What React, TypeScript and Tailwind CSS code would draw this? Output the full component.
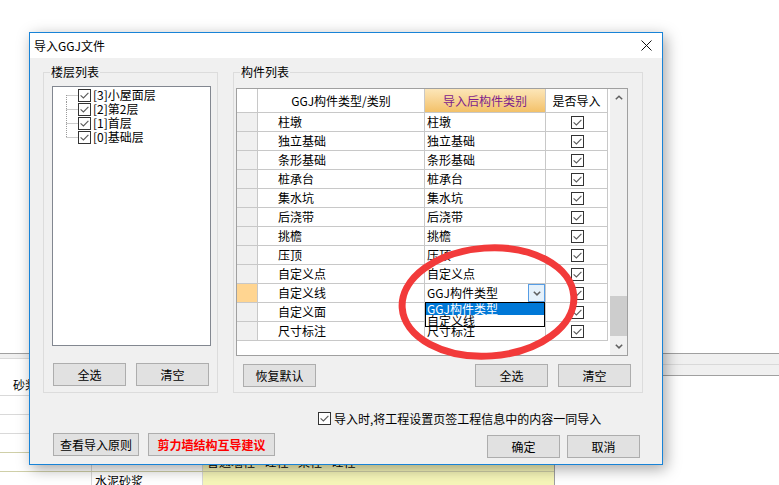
import React from "react";

const rows = [
  "柱墩",
  "独立基础",
  "条形基础",
  "桩承台",
  "集水坑",
  "后浇带",
  "挑檐",
  "压顶",
  "自定义点",
  "自定义线",
  "自定义面",
  "尺寸标注",
];

const floors = ["[3]小屋面层", "[2]第2层", "[1]首层", "[0]基础层"];

const CheckBox = () => (
  <span className="flex h-[13px] w-[13px] shrink-0 items-center justify-center border border-[#333333] bg-white">
    <svg width="9" height="7" viewBox="0 0 9 7" fill="none">
      <path d="M0.6 3.4L3.4 6L8.4 0.8" stroke="#5a5a5a" strokeWidth="1.1" />
    </svg>
  </span>
);

const Btn = ({ children, className = "" }: { children: React.ReactNode; className?: string }) => (
  <button
    type="button"
    className={`flex h-[23px] items-center justify-center border border-[#adadad] bg-[#e1e1e1] text-[12px] leading-none ${className}`}
  >
    {children}
  </button>
);

// tree connector drawn as dotted lines
const Connector = ({ idx, last }: { idx: number; last: boolean }) => (
  <svg width="12" height="14" viewBox="0 0 12 14" className="shrink-0">
    <line
      x1="0.5"
      y1={idx === 0 ? 7 : 0}
      x2="0.5"
      y2={last ? 7.5 : 14}
      stroke="#9a9a9a"
      strokeDasharray="1 1"
    />
    <line x1="0.5" y1="7.5" x2="12" y2="7.5" stroke="#9a9a9a" strokeDasharray="1 1" />
  </svg>
);

const Chevron = ({ up }: { up?: boolean }) => (
  <svg width="8" height="5" viewBox="0 0 8 5" fill="none">
    <path d={up ? "M0.8 4.3L4 1.2L7.2 4.3" : "M0.8 0.8L4 3.9L7.2 0.8"} stroke="#606060" strokeWidth="1.5" />
  </svg>
);

const App = () => {
  return (
    <div className="relative h-[485px] w-[779px] overflow-hidden bg-white font-['Noto_Sans_CJK_SC','Noto_Sans',sans-serif] text-[12px] text-black">
      {/* application behind the dialog */}
      <div className="flex pt-[353px]">
        <div className="w-[555px] border-r border-[#a0a0a0]">
          <div className="h-[5px] border-t border-[#a0a0a0] bg-[#f0f0f0]" />
          <div className="flex h-[37px] items-end border-t border-[#d9d9d9] pb-[3px] pl-[13px] leading-[14px]">
            砂浆类型
          </div>
          {[0, 1, 2, 3, 4].map((i) => (
            <div key={i} className={`flex h-[19px] border-t ${i >= 3 ? "border-[#cfcfa8]" : "border-[#d9d9d9]"}`}>
              <div className="w-[92px] border-r border-[#d9d9d9]" />
              <div className="w-[111px] border-r border-[#d9d9d9] pl-[3px] leading-[18px]">
                {i === 4 ? "水泥砂浆" : ""}
              </div>
              <div className={`flex-1 pl-[4px] leading-[18px] ${i >= 3 ? "bg-[#f6f6b9]" : ""}`}>
                {i === 3 ? "普通墙柱 - 砼柱 - 梁柱 - 砼柱" : ""}
              </div>
            </div>
          ))}
        </div>
        <div className="flex-1">
          <div className="h-[11px] border-t border-[#a0a0a0] bg-[#f0f0f0]" />
          <div className="h-[12px] border-t border-b border-t-[#d9d9d9] border-b-[#a0a0a0] bg-[#f0f0f0]" />
        </div>
      </div>

      {/* dialog */}
      <div className="absolute left-[29px] top-[32px] flex h-[433px] w-[634px] flex-col border border-[#1883d7] bg-[#f0f0f0] shadow-[3px_4px_14px_rgba(0,0,0,0.35)]">
        <div className="flex h-[25px] items-center justify-between bg-white pl-[4px] pr-[10px]">
          <span className="leading-none">导入GGJ文件</span>
          <svg width="11" height="11" viewBox="0 0 11 11">
            <path d="M0.5 0.5L10.5 10.5M10.5 0.5L0.5 10.5" stroke="#111" strokeWidth="1" />
          </svg>
        </div>

        <div className="flex flex-1 flex-col pt-[14px]">
          <div className="flex h-[321px] gap-[15px] pl-[13px]">
            {/* 楼层列表 */}
            <div className="relative flex w-[175px] flex-col border border-[#dcdcdc] pl-[8px] pt-[13px]">
              <span className="absolute -top-[8px] left-[6px] bg-[#f0f0f0] px-[1px] leading-[14px]">楼层列表</span>
              <div className="h-[260px] w-[159px] border border-[#828790] bg-white pl-[13px] pt-[1px]">
                {floors.map((f, i) => (
                  <div key={f} className="flex h-[14px] items-center">
                    <Connector idx={i} last={i === floors.length - 1} />
                    <CheckBox />
                    <span className="ml-[2px] leading-none">{f}</span>
                  </div>
                ))}
              </div>
              <div className="ml-[1px] mt-[17px] flex gap-[10px]">
                <Btn className="w-[73px] text-black">全选</Btn>
                <Btn className="w-[73px] text-black">清空</Btn>
              </div>
            </div>

            {/* 构件列表 */}
            <div className="relative flex w-[410px] flex-col border border-[#dcdcdc] pl-[2px] pt-[15px]">
              <span className="absolute -top-[8px] left-[6px] bg-[#f0f0f0] px-[1px] leading-[14px]">构件列表</span>
              <div className="flex h-[268px] w-[392px] border border-[#a0a0a0] bg-white">
                <div className="w-[371px]">
                  <div className="flex h-[24px] border-b border-[#c8c8c8]">
                    <div className="w-[21px] border-r border-[#c8c8c8]" />
                    <div className="flex w-[167px] items-center justify-center border-r border-[#c8c8c8]">
                      GGJ构件类型/类别
                    </div>
                    <div className="flex w-[121px] items-center justify-center border-r border-[#c8c8c8] bg-gradient-to-b from-[#fce6b8] to-[#f3c168] text-[#7d1d8c]">
                      导入后构件类别
                    </div>
                    <div className="flex w-[62px] items-center justify-center border-r border-[#c8c8c8]">
                      是否导入
                    </div>
                  </div>
                  {rows.map((r) => {
                    const active = r === "自定义线";
                    return (
                      <div key={r} className="flex h-[19px] border-b border-[#c8c8c8]">
                        <div className={`w-[21px] border-r border-[#c8c8c8] ${active ? "bg-[#ffd591]" : "bg-[#f0f0f0]"}`} />
                        <div className="flex w-[167px] items-center border-r border-[#c8c8c8] pl-[20px]">{r}</div>
                        <div className="relative flex w-[121px] items-center justify-between border-r border-[#c8c8c8] pl-[2px]">
                          {active ? (
                            <>
                              <span>GGJ构件类型</span>
                              <span className="flex h-[18px] w-[17px] items-center justify-center border border-[#569de5] bg-[#e5f1fb]">
                                <Chevron />
                              </span>
                              <div className="absolute left-0 top-[18px] z-10 flex h-[25px] w-[120px] flex-col border border-black bg-white leading-[12px]">
                                <div className="h-[12px] bg-[#0078d7] pl-[1px] text-white">GGJ构件类型</div>
                                <div className="h-[11px] pl-[1px]">自定义线</div>
                              </div>
                            </>
                          ) : (
                            <span>{r}</span>
                          )}
                        </div>
                        <div className="flex w-[62px] items-center justify-center border-r border-[#c8c8c8] pl-[1px]">
                          <CheckBox />
                        </div>
                      </div>
                    );
                  })}
                </div>
                <div className="w-[2px]" />
                <div className="flex w-[17px] flex-col bg-[#f0f0f0]">
                  <div className="flex h-[17px] items-center justify-center">
                    <Chevron up />
                  </div>
                  <div className="flex-1">
                    <div className="mt-[190px] h-[40px] bg-[#cdcdcd]" />
                  </div>
                  <div className="flex h-[17px] items-center justify-center">
                    <Chevron />
                  </div>
                </div>
              </div>
              <div className="mt-[8px] flex pl-[7px]">
                <Btn className="w-[73px] text-black">恢复默认</Btn>
                <Btn className="ml-[159px] w-[73px] text-black">全选</Btn>
                <Btn className="ml-[10px] w-[73px] text-black">清空</Btn>
              </div>
            </div>
          </div>

          <div className="mt-[19px] flex items-center pl-[288px]">
            <CheckBox />
            <span className="ml-[3px] leading-none">导入时,将工程设置页签工程信息中的内容一同导入</span>
          </div>

          <div className="mt-[8px] flex pl-[23px]">
            <Btn className="w-[86px] text-black">查看导入原则</Btn>
            <Btn className="ml-[9px] w-[127px] font-bold text-[#ff0000]">剪力墙结构互导建议</Btn>
            <Btn className="ml-[212px] mt-[2px] w-[73px] text-black">确定</Btn>
            <Btn className="ml-[7px] mt-[2px] w-[73px] text-black">取消</Btn>
          </div>
        </div>
      </div>

      {/* red annotation ring */}
      <svg className="pointer-events-none absolute left-[385px] top-[237px]" width="210" height="130" viewBox="0 0 210 130">
        <ellipse cx="103" cy="65" rx="86" ry="54" fill="none" stroke="#f23a3a" strokeWidth="7" transform="rotate(-4 103 65)" />
      </svg>
    </div>
  );
};

export default App;
